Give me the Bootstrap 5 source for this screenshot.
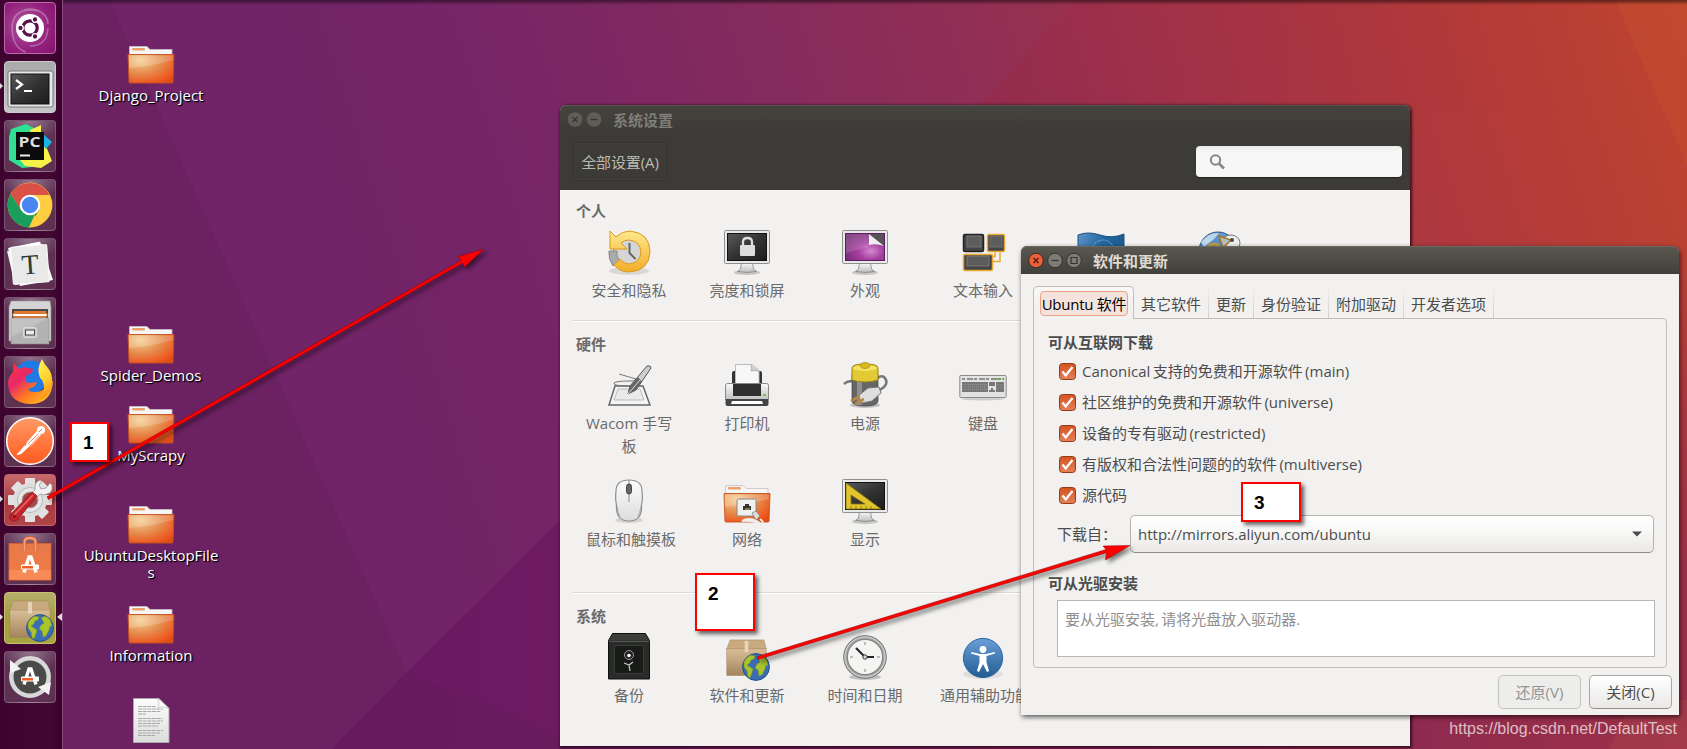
<!DOCTYPE html>
<html lang="zh-CN">
<head>
  <meta charset="UTF-8" />
  <title>Ubuntu Desktop</title>
  <link href="https://cdn.jsdelivr.net/npm/bootstrap@5.3.3/dist/css/bootstrap.min.css" rel="stylesheet" />
  <style>
    body {
      width: 1687px;
      height: 749px;
      overflow: hidden;
      font-family: "Open Sans", "Noto Sans CJK SC", sans-serif;
      font-size: 15px;
      line-height: 23px;
      color: #4c4c4c;
    }
    .wallpaper { position: absolute; inset: 0; }

    /* launcher */
    .launcher {
      position: relative;
      width: 62px;
      height: 749px;
      padding: 2px 0 0 4px;
      gap: 7px;
      background: linear-gradient(90deg, #3e042f, #420733 80%, #3a022c);
      box-shadow: 1px 0 0 #8a4b80;
    }
    .tile {
      position: relative;
      width: 52px;
      height: 52px;
      border-radius: 4px;
      border: 1px solid rgba(255, 255, 255, .16);
      background: radial-gradient(ellipse 34px 22px at 50% 0, rgba(255, 255, 255, .4), rgba(255, 255, 255, .1) 90%), #4c1a40;
    }
    .tile svg { position: absolute; left: -1px; top: -1px; }
    .tile-dash { background: radial-gradient(circle at 40% 45%, #b25aa0, #92207c 60%, #85146e); border-color: #b76aa9; }
    .tile-term { background: linear-gradient(#aaa, #c6c6c6); border-color: #ccc; }
    .tile-sys { background: linear-gradient(#c66a6c, #a83840 55%, #b04448); border-color: #c0686a; }
    .tile-soft { background: linear-gradient(#b4ae6c, #a5a03c 50%, #a8a443); border-color: #c4c070; }
    .tile.running::before, .tile.focused::after {
      content: "";
      position: absolute;
      top: 20px;
      border: 4px solid transparent;
    }
    .tile.running::before { left: -6px; border-left-color: #ddd; border-right-width: 0; }
    .tile.focused::after { right: -7px; border-right: 5px solid #ddd; border-left-width: 0; }

    /* desktop icons */
    .desk-icon {
      position: absolute;
      left: 81px;
      width: 140px;
      text-align: center;
      color: #fff;
      line-height: 17px;
      text-shadow: 1px 1px 0 #000, 1px 1px 2px rgba(0, 0, 0, .8);
    }
    .desk-icon svg { display: block; margin: 0 auto -3px; }
    .desk-icon span { display: block; }
    .at-django { top: 42px; } .at-spider { top: 322px; } .at-scrapy { top: 402px; }
    .at-files { top: 502px; } .at-info { top: 602px; } .at-doc { top: 697px; }

    /* windows */
    .win { position: absolute; background: #f2f1f0; }
    .win-settings {
      left: 560px; top: 105px; width: 850px; height: 641px;
      border-radius: 6px 6px 0 0;
      box-shadow: 1px 1px 3px 1px rgba(30, 0, 15, .75);
      color: #6a6a6a;
    }
    .win-updates {
      left: 1021px; top: 246px; width: 658px; height: 469px;
      border-radius: 7px 7px 0 0;
      box-shadow: 1px 2px 5px rgba(0, 0, 0, .65);
    }
    .win-head { height: 85px; background: linear-gradient(#45433e, #3c3b37 35%); border-radius: 6px 6px 0 0; box-shadow: inset 0 1px 0 #55534d; }
    .win-bar { height: 28px; padding-left: 7px; gap: 3px; font-weight: 700; }
    .win-bar span { padding: 2px 0 0 8px; }
    .win-updates .win-bar { background: linear-gradient(#5b5951, #403f3a); color: #dfdbd2; border-radius: 6px 6px 0 0; box-shadow: inset 0 1px 0 #6b6960; }
    .win-head .win-bar { color: #807d78; }
    .all-btn {
      width: 94px; height: 39px; margin: 9px 0 0 13px; padding: 2px 0 0;
      border: 1px solid #35342f; border-radius: 5px;
      box-shadow: inset 0 0 0 1px #434039;
      color: #bdb9b0; font-size: 15px; letter-spacing: -.1px;
    }
    .find-box {
      width: 206px; height: 31px; margin: 13px 8px 0 0; padding-left: 13px;
      border-radius: 4px; background: linear-gradient(#ebebeb, #f7f7f7 20%);
      box-shadow: 0 1px 1px #222;
    }
    .panel-group { padding: 12px 10px 0; }
    .panel-group.first { height: 130px; padding-top: 10px; }
    .panel-group.second { height: 272px; }
    .panel-group + .panel-group { background: linear-gradient(#dcdad8 1px, #fff 1px, #fff 2px, transparent 2px) 13px 0 / 824px 2px no-repeat; padding-top: 13px; }
    .group-name { height: 22px; line-height: 22px; margin: 0 0 7px 6px; font-size: 15px; font-weight: 700; }
    .panel-grid { display: grid; grid-template-columns: repeat(7, 118px); row-gap: 20px; }
    .panel-item { text-align: center; padding: 0 16px; white-space: nowrap; }
    .panel-item svg { display: block; margin: 0 auto 2px; }

    /* notebook */
    .notebook { padding: 12px 12px 0; }
    .notebook .nav-tabs { border: 0; height: 33px; align-items: flex-end; position: relative; z-index: 1; }
    .notebook .nav-link {
      padding: 0 7px; height: 31px; line-height: 34px; margin: 0 0 1px; color: #4c4c4c;
      border: 0; border-right: 1px solid; border-radius: 0;
      border-image: linear-gradient(#f2f1f0, #cfcdca) 1;
      white-space: nowrap;
    }
    .notebook .nav-link.active {
      width: 101px; height: 33px; margin: 0; padding: 4px 5px 0 6px;
      background: linear-gradient(#f8f8f7, #f2f1f0 60%);
      border: 1px solid #c0bebb; border-bottom: 0; border-image: none; border-radius: 5px 5px 0 0;
    }
    .focus-frame { display: block; height: 25px; line-height: 24px; border: 1px solid #f0a287; border-radius: 4px; background: #f4e3dd; text-align: center; letter-spacing: -.25px; }
    .tab-page { height: 350px; margin-top: -1px; border: 1px solid #c0bebb; border-radius: 0 4px 4px 4px; padding: 11px 12px 0 14px; }
    .block-name { font-size: 15px; font-weight: 700; line-height: 24px; margin: 0; }
    .src-list { padding-top: 2px; }
    .src-check { height: 31px; padding-left: 11px; gap: 6px; word-spacing: -1.5px; }
    .src-check svg { margin-top: -1px; }
    .download-row { height: 38px; margin: 4px 0 0 9px; }
    .download-row .row-label { width: 73px; }
    .server-btn {
      flex: 1; height: 38px; padding: 0 11px 0 7px; font-size: 15px; color: #4c4c4c;
      border: 1px solid #b6b3af; border-bottom-color: #8f8d89; border-radius: 5px;
      background: linear-gradient(#fff, #f9f9f8 40%, #eae8e7);
    }
    .disc-name { margin-top: 18px; }
    .disc-list { height: 57px; margin: 5px 0 0 9px; padding: 7px; border: 1px solid #b9b7b4; background: #fff; color: #8f8f8f; width: 598px; word-spacing: -1.5px; }
    .foot-btns { padding: 7px 7px 0; gap: 8px; }
    .foot-btns .btn { width: 83px; height: 34px; padding: 0; font-size: 15px; border: 1px solid #aaa7a3; border-bottom-color: #8f8d89; border-radius: 5px; background: linear-gradient(#fff, #eae8e7); color: #4c4c4c; }
    .foot-btns .btn:disabled { opacity: 1; background: #ededec; border-color: #c4c2bf; color: #949494; }

    /* numbered marks */
    .arrows { position: absolute; left: 0; top: 0; filter: drop-shadow(3px 3px 2px rgba(0, 0, 0, .5)); }
    .step { position: absolute; background: #fff; border: 2px solid #f00; box-shadow: 3px 3px 4px rgba(0, 0, 0, .6); font: bold 19px/24px "Liberation Sans", sans-serif; color: #000; }
    .step-1 { left: 70px; top: 422px; width: 39px; height: 40px; padding: 7px 0 0 11px; }
    .step-2 { left: 695px; top: 573px; width: 60px; height: 58px; padding: 7px 0 0 11px; }
    .step-3 { left: 1241px; top: 482px; width: 60px; height: 40px; padding: 7px 0 0 11px; }
    .site-mark { position: absolute; right: 10px; bottom: 9px; font-family: "Liberation Sans", sans-serif; font-size: 16px; line-height: 22px; color: rgba(255, 255, 255, .7); }
  </style>
</head>
<body>
  <!-- shared shapes -->
  <svg width="0" height="0" class="position-absolute">
    <defs>
      <radialGradient id="gFolder" cx=".27" cy=".2" r=".95"><stop offset="0" stop-color="#f6cf92" /><stop offset=".5" stop-color="#e58a4c" /><stop offset=".85" stop-color="#ee5a20" /><stop offset="1" stop-color="#e04c12" /></radialGradient>
      <linearGradient id="gGrey" x2="0" y2="1"><stop offset="0" stop-color="#fafafa" /><stop offset="1" stop-color="#bdbdbd" /></linearGradient>
      <linearGradient id="gPaper" x2="0" y2="1"><stop offset="0" stop-color="#fdfdfd" /><stop offset="1" stop-color="#dcdcdc" /></linearGradient>
      <linearGradient id="gDark" x2="1" y2="1"><stop offset="0" stop-color="#5a5a5a" /><stop offset=".5" stop-color="#333" /><stop offset="1" stop-color="#1c1c1c" /></linearGradient>
      <radialGradient id="gPurple" cx=".65" cy=".65" r=".8"><stop offset="0" stop-color="#d58bd0" /><stop offset=".4" stop-color="#a63fa0" /><stop offset="1" stop-color="#6d2a72" /></radialGradient>
      <linearGradient id="gGold" x2="0" y2="1"><stop offset="0" stop-color="#ffe98c" /><stop offset="1" stop-color="#f3ac28" /></linearGradient>
      <linearGradient id="gBox" x2="0" y2="1"><stop offset="0" stop-color="#d9bf98" /><stop offset="1" stop-color="#a4855c" /></linearGradient>
      <linearGradient id="gBlue" x2="0" y2="1"><stop offset="0" stop-color="#6a9ed8" /><stop offset="1" stop-color="#215d92" /></linearGradient>
      <linearGradient id="gFlag" x2="1" y2=".3"><stop offset="0" stop-color="#5b93c8" /><stop offset=".6" stop-color="#1f659f" /><stop offset="1" stop-color="#1d5c90" /></linearGradient>
      <linearGradient id="gBag" x2="0" y2="1"><stop offset="0" stop-color="#e77a4a" /><stop offset="1" stop-color="#f27a42" /></linearGradient>
      <linearGradient id="gFox" x1="0" y1="0" x2=".9" y2="1"><stop offset="0" stop-color="#ff3a3a" /><stop offset=".35" stop-color="#e8266a" /><stop offset=".65" stop-color="#ff7b1f" /><stop offset="1" stop-color="#ffc828" /></linearGradient>
      <linearGradient id="gTail" x2=".3" y2="1"><stop offset="0" stop-color="#fff36a" /><stop offset=".6" stop-color="#ffd22a" /><stop offset="1" stop-color="#ff8f1c" /></linearGradient>
      <linearGradient id="gPost" x2="0" y2="1"><stop offset="0" stop-color="#ff9a63" /><stop offset="1" stop-color="#ff5a20" /></linearGradient>
      <linearGradient id="gCheck" x2="0" y2="1"><stop offset="0" stop-color="#d2531f" /><stop offset="1" stop-color="#e68159" /></linearGradient>
    </defs>
    <symbol id="folder" viewBox="0 0 48 48">
      <path d="M2.500 12.500V4.500H20l3 3h22v6z" fill="#f6f6f6" stroke="#c9bfc5" stroke-width=".8" />
      <rect x="5" y="6" width="13" height="2.500" rx="1" fill="#f0a06c" />
      <path d="M1 12.500h46l-1 27.500q0 1-1 1H3q-1 0-1-1z" fill="url(#gFolder)" stroke="#c4521f" stroke-width=".9" />
      <path d="M2 13.500h44l-.3 4.500Q26 24 2 26z" fill="#fff" opacity=".2" />
    </symbol>
    <symbol id="monitor" viewBox="0 0 48 48">
      <ellipse cx="24" cy="43.500" rx="13" ry="2.500" fill="#000" opacity=".18" />
      <path d="M18.500 34h11l1 6 3 2.500q-9.500 1.800-19 0l3-2.500z" fill="url(#gGrey)" stroke="#777" stroke-width=".7" />
      <rect x="1.500" y="1.500" width="45" height="33" rx="1" fill="#e9e9e9" stroke="#8f8f8f" />
      <rect x="4.500" y="4.500" width="39" height="27" fill="url(#gDark)" stroke="#111" />
    </symbol>
    <symbol id="globe" viewBox="0 0 28 28">
      <circle cx="14" cy="14" r="13.400" fill="#3a6db4" stroke="#284f8a" />
      <path d="M2 9q2-5 7-7l4 1-1 3-3 1-1 3-3 2 3 2 3 2-1 4-2 5-2-1-1-6-3-4zM15 4l4-2q5 2 6 6l1 5-2-1-1 4-3 6-3 1-1-6-3-2 2-4 3-2z" fill="#aac42c" stroke="#6d8a28" stroke-width=".5" />
    </symbol>
    <symbol id="parcel" viewBox="0 0 48 48">
      <rect x="3" y="11" width="42" height="29" fill="url(#gBox)" stroke="#997c55" stroke-width=".5" />
      <path d="M6.500 2h36L45 11.500H3z" fill="#c9a97e" stroke="#a88960" stroke-width=".6" />
      <path d="M22 3h4v12h-4z" fill="#eee0c8" opacity=".8" />
    </symbol>
    <symbol id="letter-a" viewBox="0 0 20 20">
      <path d="M4 18.500L9 3h2l5 15.500" fill="none" stroke="#fff" stroke-width="3.400" />
      <rect x="1" y="10.500" width="18" height="5" rx="1" fill="#fff" />
      <rect x="2" y="12" width="11" height="2.500" fill="#f06020" />
    </symbol>
    <symbol id="check-on" viewBox="0 0 17 17">
      <rect x=".5" y=".5" width="16" height="16" rx="3" fill="url(#gCheck)" stroke="#963b16" />
      <path d="M3.500 8.500l3.200 4L13.500 4" fill="none" stroke="#fff" stroke-width="2.300" />
    </symbol>
  </svg>

  <svg class="wallpaper" width="1687" height="749">
    <defs>
      <linearGradient id="wMain" gradientUnits="userSpaceOnUse" x1="150" y1="500" x2="1687" y2="0">
        <stop offset="0" stop-color="#702468" /><stop offset=".25" stop-color="#742467" /><stop offset=".42" stop-color="#822a60" /><stop offset=".6" stop-color="#943052" /><stop offset=".7" stop-color="#a2344a" /><stop offset=".85" stop-color="#b23a3a" /><stop offset="1" stop-color="#bf442e" />
      </linearGradient>
      <linearGradient id="wLow" gradientUnits="userSpaceOnUse" x1="400" y1="0" x2="1687" y2="0">
        <stop offset="0" stop-color="#6a1a63" /><stop offset=".2" stop-color="#701a60" /><stop offset=".77" stop-color="#8e2a50" /><stop offset="1" stop-color="#9c3048" />
      </linearGradient>
      <linearGradient id="wEdge" x2="0" y2="1"><stop offset="0" stop-opacity=".5" /><stop offset="1" stop-opacity="0" /></linearGradient>
      <linearGradient id="wFade" x2="1"><stop offset="0" stop-color="#a01c30" stop-opacity=".16" /><stop offset="1" stop-color="#a01c30" stop-opacity="0" /></linearGradient>
      <linearGradient id="wSide" x2="0" y2="1"><stop offset="0" stop-color="#a03048" stop-opacity="0" /><stop offset="1" stop-color="#a03048" /></linearGradient>
    </defs>
    <rect width="1687" height="749" fill="url(#wMain)" />
    <path d="M0 0H110L407 672L332 749H0z" fill="#6c2262" />
    <path d="M332 749L407 672L560 520L1687 560V749z" fill="url(#wLow)" />
    <path d="M332 749L407 672L680 790z" fill="#641c5a" opacity=".5" />
    <path d="M1077 0L973 110H1600V0z" fill="url(#wFade)" />
    <path d="M1615 0L1687 165V0z" fill="#d0602c" opacity=".22" />
    <rect x="1670" y="260" width="17" height="300" fill="url(#wSide)" />
    <path d="M1609 749L1632 700H1687V749z" fill="#c06050" opacity=".2" />
    <rect width="1687" height="5" fill="url(#wEdge)" />
  </svg>

  <nav class="launcher d-flex flex-column">
    <div class="tile tile-dash"><svg width="52" height="52"><g fill="none" stroke="#fff" stroke-opacity=".3" stroke-width="1.500"><path d="M8 26Q9 8 26 8T44 22M44 26Q43 44 26 44M8 24Q8 46 22 50M20 8Q36 4 44 18" /></g><circle cx="26" cy="26" r="14" fill="#fff" /><circle cx="26" cy="26" r="7.200" fill="none" stroke="#5a1049" stroke-width="3.200" /><g fill="#5a1049" stroke="#fff" stroke-width="1.300"><circle cx="16.500" cy="26" r="2.800" /><circle cx="31" cy="17.500" r="2.800" /><circle cx="31" cy="34.500" r="2.800" /></g></svg></div>
    <div class="tile tile-term running"><svg width="52" height="52"><rect x="4" y="10" width="45" height="36" rx="2" fill="#e8e8e8" stroke="#777" /><rect x="7" y="13" width="38" height="30" fill="url(#gDark)" stroke="#111" /><path d="M12 19l6 4.500-6 4.500M20 30h8" fill="none" stroke="#fff" stroke-width="2.200" /></svg></div>
    <div class="tile"><svg width="52" height="52"><path d="M5 17L7 9 22 4l10 5v20l-4 18-10 1L5 40z" fill="#2fdf92" /><path d="M26 10l11-5v8l3 8 8 20-11 7-16-2-5-6 14-4z" fill="#f6f24a" /><path d="M39 14l9 8-6 7-5-6z" fill="#1ab4e4" /><rect x="12" y="12" width="28" height="28" fill="#0b0b0b" /><text x="14.500" y="27" font-family="Open Sans" font-size="15" font-weight="700" fill="#ddd" textLength="22" lengthAdjust="spacingAndGlyphs">PC</text><path d="M16 35.500h10" stroke="#eee" stroke-width="2" /></svg></div>
    <div class="tile"><svg width="52" height="52"><circle cx="26" cy="26" r="22.400" fill="#ffcd40" /><path d="M26 16H45.500A22.400 22.400 0 0 0 6.500 15L17 31z" fill="#da5044" /><path d="M6.600 15A22.400 22.400 0 0 0 25 48.400L35 31 17 31z" fill="#1a9e5c" /><path d="M26 26h9l-10 22.400 10-3z" fill="#ffcd40" /><circle cx="26" cy="26" r="10.300" fill="#fff" /><circle cx="26" cy="26" r="8.200" fill="#4a86f0" /></svg></div>
    <div class="tile"><svg width="52" height="52"><path d="M4 10L36 3.500 49 42 16 48z" fill="#fff" /><path d="M3 13l36-7 8 34-36 7z" fill="#f2f2f2" /><rect x="8" y="8" width="36" height="37" rx="1" transform="rotate(-4 26 26)" fill="#e9e9e9" stroke="#fafafa" /><text x="26" y="36" text-anchor="middle" font-family="Liberation Serif" font-size="28" fill="#2b3a34" transform="rotate(-4 26 26)">T</text></svg></div>
    <div class="tile"><svg width="52" height="52"><path d="M7 4h39l1 6v34H5V10z" fill="#d4d4d4" stroke="#999" stroke-width=".6" /><rect x="8" y="12" width="36" height="16" fill="#4a4a4a" /><path d="M10 14h32v8H10z" fill="#e07830" /><path d="M9 16.500h34v3H9z" fill="#fff" stroke="#e0762e" /><path d="M7 21h38v26H7z" fill="#b3b3b3" stroke="#8a8a8a" stroke-width=".6" /><path d="M7 21h38L7 40z" fill="#fff" opacity=".2" /><rect x="19.500" y="30.500" width="13" height="10" rx="2" fill="#c9c9c9" stroke="#ddd" /><rect x="21.500" y="33" width="9" height="5" fill="#eee" stroke="#444" /></svg></div>
    <div class="tile"><svg width="52" height="52"><circle cx="27" cy="21" r="16.500" fill="#1f7ae6" /><path d="M10 7l5 6q4-3 9-1l5 1-1 4-5 2-2 4q0 4 6 4l6-1q-2 6-8 6-2 4 6 4 10 0 12-9l6-2Q48 48 26 48 4 47 4 26q1-6 5-10z" fill="url(#gFox)" /><path d="M38 3q2 5 6 9 5 6 4 16-3 14-16 17 9-6 8-15-1-6-4-8-4-9 2-19z" fill="url(#gTail)" /></svg></div>
    <div class="tile"><svg width="52" height="52"><circle cx="26" cy="26" r="23.300" fill="url(#gPost)" stroke="#fff" stroke-width="1.500" /><circle cx="37" cy="15" r="4" fill="#fff" /><path d="M38 14l-3 3" stroke="#f26b3a" stroke-width="1" /><path d="M33 16l4 4-9 10-8 5 3-8z" fill="#fff" /><path d="M24 29l10-10M26 31l9-10" stroke="#f27b4a" stroke-width=".8" /><path d="M21 31l-5 6-3 2.500 4-1 6-6" fill="#fff" stroke="#fff" stroke-width="1.200" /></svg></div>
    <div class="tile tile-sys running"><svg width="52" height="52"><g transform="translate(26 26)"><g fill="#e2e2e2"><rect x="-5" y="-22" width="10" height="44" rx="1" /><rect x="-5" y="-22" width="10" height="44" rx="1" transform="rotate(45)" /><rect x="-5" y="-22" width="10" height="44" rx="1" transform="rotate(90)" /><rect x="-5" y="-22" width="10" height="44" rx="1" transform="rotate(135)" /></g><circle r="17" fill="#dedede" /><circle r="12.500" fill="#e8e8e8" stroke="#b8b8b8" /><circle r="8" fill="#a8474b" stroke="#aaa" /></g><path d="M31 16q-1-8 5-10l2 1-3 4 2 4 5-1 4-5 2 2q1 8-5 9-3 2-7 0l-5 5-5-5z" fill="#f2f2f2" stroke="#888" stroke-width=".7" /><path d="M33 22L14 45q-4 4-7 1-3-3 1-7L28 18z" fill="#c4262c" stroke="#8e1a1e" /><path d="M29 21L10 41" stroke="#e8686a" stroke-width="1.500" /><circle cx="10.500" cy="42.500" r="1.800" fill="#8e1a1e" /></svg></div>
    <div class="tile"><svg width="52" height="52"><path d="M5 10.500h42V47H5z" fill="url(#gBag)" stroke="#d65f30" /><path d="M5 37h42v10H5z" fill="#ff9c68" opacity=".5" /><path d="M20.500 18V9q0-4 5.500-4t5.500 4v9" fill="none" stroke="#d9622f" stroke-width="3.500" /><path d="M20.500 18V9q0-4 5.500-4t5.500 4v9" fill="none" stroke="#f6a27c" stroke-width="1.800" /><use href="#letter-a" x="16" y="20" width="20" height="22" /></svg></div>
    <div class="tile tile-soft running focused"><svg width="52" height="52"><use href="#parcel" x="3" y="7" width="46" height="46" /><use href="#globe" x="22" y="22" width="28" height="28" /></svg></div>
    <div class="tile"><svg width="52" height="52"><circle cx="26" cy="26" r="17" fill="#4a4a48" /><circle cx="26" cy="26" r="18.700" fill="none" stroke="#d8d8d8" stroke-width="4.500" /><path d="M6 9l11 9-11 4z" fill="#f2f2f2" /><path d="M34 36l13-5-2 13z" fill="#f2f2f2" /><use href="#letter-a" x="16" y="15" width="20" height="20" /></svg></div>
  </nav>

  <div class="desk-icon at-django"><svg width="48" height="48"><use href="#folder" /></svg><span>Django_Project</span></div>
  <div class="desk-icon at-spider"><svg width="48" height="48"><use href="#folder" /></svg><span>Spider_Demos</span></div>
  <div class="desk-icon at-scrapy"><svg width="48" height="48"><use href="#folder" /></svg><span>MyScrapy</span></div>
  <div class="desk-icon at-files"><svg width="48" height="48"><use href="#folder" /></svg><span>UbuntuDesktopFile<br>s</span></div>
  <div class="desk-icon at-info"><svg width="48" height="48"><use href="#folder" /></svg><span>Information</span></div>
  <div class="desk-icon at-doc"><svg width="48" height="48"><path d="M6.500 1.500H32l10 10v34H6.500z" fill="url(#gPaper)" stroke="#aaa" /><path d="M31 1.500q2 6 0 9 5-2 11 1z" fill="#fff" stroke="#bbb" stroke-width=".7" /><path d="M11 9.500h18M11 12h25M11 14.500h23M11 17h8M11 21.500h24M11 24h25M11 26.500h22M11 29h20M11 33.500h25M11 36h22M11 38.500h17" stroke="#a9a9a9" stroke-dasharray="4 .6" /></svg></div>

  <!-- system settings -->
  <section class="win win-settings">
    <div class="win-head">
      <div class="win-bar d-flex align-items-center">
        <svg width="16" height="16"><circle cx="8" cy="8.500" r="7.300" fill="#5f5d57" /><path d="M5.500 6l5 5M10.500 6l-5 5" stroke="#36342f" stroke-width="1.200" /></svg>
        <svg width="16" height="16"><circle cx="8" cy="8.500" r="7.300" fill="#5f5d57" /><path d="M4.500 8.500h7" stroke="#36342f" stroke-width="1.200" /></svg>
        <span>系统设置</span>
      </div>
      <div class="d-flex justify-content-between">
        <button class="btn all-btn">全部设置(A)</button>
        <div class="find-box d-flex align-items-center"><svg width="16" height="16"><circle cx="6.500" cy="6" r="4.700" fill="none" stroke="#868686" stroke-width="2" /><path d="M10 9.500l5 5" stroke="#868686" stroke-width="2.600" /></svg></div>
      </div>
    </div>
    <div class="panel-group first">
      <h2 class="group-name">个人</h2>
      <div class="panel-grid">
        <div class="panel-item"><svg width="48" height="48"><ellipse cx="24" cy="42" rx="20" ry="4" opacity=".1" /><circle cx="24" cy="24" r="16" fill="#d5d5d5" stroke="#888" /><path d="M4 22q-1 8 4 15l6-6q-3-4-2-9z" fill="#aaa" stroke="#888" /><path d="M5 2l6 6Q17 2 25 2q20 2 20 21-1 19-21 20-9 0-15-7l6-6q4 5 9 5 11-1 12-12-1-11-12-12-5 0-8 3l6 6H5z" fill="url(#gGold)" stroke="#d9991a" /><path d="M24.500 14v10l6 6" fill="none" stroke="#666" stroke-width="2" /></svg>安全和隐私</div>
        <div class="panel-item"><svg width="48" height="48"><use href="#monitor" /><rect x="17" y="16" width="15" height="11" rx="1" fill="#ddd" /><path d="M20 17v-4q0-4 4.500-4t4.500 4v4" fill="none" stroke="#ddd" stroke-width="2.300" /></svg>亮度和锁屏</div>
        <div class="panel-item"><svg width="48" height="48"><use href="#monitor" /><rect x="4.500" y="4.500" width="39" height="27" fill="url(#gPurple)" stroke="#5d1b60" /><path d="M5 5h23v13L5 24z" fill="#fff" opacity=".15" /><path d="M28 5h15v12z" fill="#555" /><path d="M28 5v11q7-2 15 1z" fill="#eee" /></svg>外观</div>
        <div class="panel-item"><svg width="48" height="48"><g stroke="#222" stroke-width="1.500" fill="#444"><rect x="4.500" y="5.500" width="20" height="17" rx="1.500" /><rect x="28.500" y="5.500" width="17" height="17" rx="1.500" stroke="#eaa92e" /><rect x="4.500" y="25.500" width="29" height="16" rx="1.500" stroke="#eaa92e" /></g><path d="M41 23.500v9h-7M36 23.500v4h-3" fill="none" stroke="#eaa92e" stroke-width="1.500" /><g fill="#5c5c5c" stroke="#858585" stroke-width=".7"><rect x="8" y="7" width="14" height="11" /><rect x="31" y="7" width="12" height="11" /><rect x="8" y="27" width="22" height="10" /></g></svg>文本输入</div>
        <div class="panel-item"><svg width="48" height="48"><path d="M1 6q10-4 22 0t24-1v34q-12 4-24 0T1 40z" fill="url(#gFlag)" stroke="#1c5078" /><circle cx="26" cy="22" r="11" fill="none" stroke="#7fb0d4" stroke-dasharray="2 1" /></svg></div>
        <div class="panel-item"><svg width="48" height="48"><circle cx="23" cy="22" r="19" fill="url(#gBlue)" stroke="#2a547e" /><path d="M6 13q8-10 18-9l-5 6-10 8z" fill="#bbd8ea" /><path d="M13 21q0-6 6-6t6 6" fill="none" stroke="#c59c3c" stroke-width="3" /><ellipse cx="36" cy="14" rx="9" ry="8" fill="#ededed" stroke="#777" /><path d="M24 7l12 4-3 3-5 5z" fill="#bbb" stroke="#a07a22" stroke-width="1.500" /><circle cx="37" cy="11" r="2" fill="#444" /></svg></div>
      </div>
    </div>
    <div class="panel-group second">
      <h2 class="group-name">硬件</h2>
      <div class="panel-grid">
        <div class="panel-item"><svg width="48" height="48"><path d="M10 24h28l7 19H4z" fill="#f4f4f4" stroke="#666" stroke-width="1.500" /><path d="M13 27h22l4 11H9z" fill="#eaeaea" stroke="#bbb" /><path d="M14 12l17 5q2 2-6 2-14 0-16 2-1 3 14 3" fill="none" stroke="#777" /><path d="M42 4q4-1 4 2L31 28l-8 4 2-8z" fill="#c9cfd2" stroke="#555" /><path d="M23 32l2-8 8-9 4 5-6 8z" fill="#666" /><path d="M23 32l12-14" stroke="#ddd" /></svg>Wacom 手写<br>板</div>
        <div class="panel-item"><svg width="48" height="48"><rect x="9" y="9" width="30" height="18" rx="2" fill="#333" /><path d="M12.500 2.500H29l7 6V25H12.500z" fill="#f7f7f7" stroke="#bbb" /><path d="M28 3q1 4 0 6 3-1 8 0" fill="#ccc" stroke="#999" stroke-width=".7" /><rect x="2.500" y="21.500" width="43" height="17" rx="2" fill="url(#gGrey)" stroke="#888" /><path d="M10 22h28v12H10z" fill="#2f2f2f" /><path d="M2.500 37h43v5q0 2-2 2h-39q-2 0-2-2z" fill="#444" /><path d="M9 39h30l1 3H8z" fill="#fff" /><rect x="40" y="32" width="3" height="2" fill="#6fce3f" /></svg>打印机</div>
        <div class="panel-item"><svg width="48" height="48"><ellipse cx="24" cy="43" rx="15" ry="3" opacity=".2" /><path d="M3 22q3-3 9-3M37 16q3-3 6-1 5 5 0 10l-7 5" fill="none" stroke="#777" stroke-width="2.500" /><path d="M11 12h26v27q0 5-13 5t-13-5z" fill="#666" stroke="#444" stroke-width=".7" /><path d="M16 12h5v31h-5z" fill="#ccc" opacity=".4" /><path d="M11 6q0-4 13-4t13 4v12q-13 4-26 0z" fill="#e3c936" stroke="#9c8614" /><ellipse cx="24" cy="6" rx="12" ry="3" fill="#f3e263" /><ellipse cx="24" cy="3.500" rx="5" ry="3" fill="#d7b91e" stroke="#96800f" stroke-width=".6" /><path d="M17 34l10-8 11-1 2 6-9 8-10 2z" fill="#dedede" stroke="#777" /><path d="M19 34l-9 5M23 37l-9 5" stroke="#b98748" stroke-width="2.600" /></svg>电源</div>
        <div class="panel-item"><svg width="48" height="48"><ellipse cx="24" cy="37" rx="22" ry="1.500" opacity=".15" /><rect x=".8" y="13.500" width="46.400" height="22" rx="1" fill="#e2e2e2" stroke="#8b8b8b" /><path d="M3 17h42" stroke="#777" stroke-width="1.500" stroke-dasharray="3 2 6 1" /><path d="M37 17h8" stroke="#66a83e" stroke-width="1.500" stroke-dasharray="2 1" /><path d="M3 20h26v10H3zM30 20h6v4h-6zM37 20h8v10h-8zM32 26h2v2h2v2h-6v-2h2z" fill="#777" /><path d="M3 22.500h26M3 25h26M3 27.500h26M37 23h8M37 26h8" stroke="#aaa" stroke-width=".6" stroke-dasharray="1 1" /></svg>键盘</div>
        <div class="panel-item"></div><div class="panel-item"></div><div class="panel-item"></div>
        <div class="panel-item"><svg width="48" height="48"><ellipse cx="24" cy="42" rx="14" ry="3" opacity=".12" /><path d="M24 2q13 0 13 11 1 8-.5 14 1 16-12.500 16T11.500 27Q10 21 11 13 11 2 24 2z" fill="url(#gPaper)" stroke="#8f8f8f" stroke-width="1.200" /><path d="M12 28q1 7 3 11M36 28q-1 7-3 11" fill="none" stroke="#aaa" /><path d="M24 2v22" stroke="#888" /><rect x="21.500" y="6" width="5" height="10" rx="2.500" fill="#666" stroke="#444" /></svg><span class="d-block mx-n3">鼠标和触摸板</span></div>
        <div class="panel-item"><svg width="48" height="48"><use href="#folder" y="3" width="48" height="48" /><rect x="14" y="21" width="19" height="17" rx="1.500" fill="#f0f0ee" stroke="#888" /><path d="M20 32v-4h2v-2h4v2h2v4z" fill="#333" /><path d="M22 31h5" stroke="#d5c43a" /><path d="M29 35l4-2 4 5-4 4z" fill="#ddd" stroke="#777" stroke-width=".7" /><path d="M19 43q8-5 18 2-10-3-18-2zM37 41q4 3 2 4" fill="none" stroke="#eee" stroke-width="2" /></svg>网络</div>
        <div class="panel-item"><svg width="48" height="48"><use href="#monitor" /><path d="M5 5v26h35zM10 17l14 9H10z" fill="#e0c52f" stroke="#857210" stroke-width=".8" fill-rule="evenodd" /><path d="M10 31v-3M15 31v-3M20 31v-3M25 31v-3M30 31v-3" stroke="#857210" stroke-width=".8" /></svg>显示</div>
      </div>
    </div>
    <div class="panel-group">
      <h2 class="group-name">系统</h2>
      <div class="panel-grid">
        <div class="panel-item"><svg width="48" height="48" overflow="visible"><path d="M7.500 -.5h33l4 7v38.500h-41V6.500z" fill="#292b29" stroke="#111" /><path d="M8 0h32l4 6.500H4z" fill="#3c3e3c" /><path d="M4 7.500h40" stroke="#555" /><rect x="9.500" y="11.500" width="29" height="28" rx="2" fill="#191b19" stroke="#3a3c3a" /><circle cx="24" cy="21" r="4.500" fill="#222" stroke="#999" /><circle cx="24" cy="21.500" r="1.800" fill="#fff" /><path d="M24 31l-5-2M24 31l4-3M24 31l1 6" stroke="#ccc" stroke-width="1.200" /></svg>备份</div>
        <div class="panel-item"><svg width="48" height="48"><use href="#parcel" x="1" y="4" width="45" height="45" /><use href="#globe" x="19" y="19" width="28" height="28" /></svg>软件和更新</div>
        <div class="panel-item"><svg width="48" height="48"><ellipse cx="24" cy="43" rx="16" ry="3" opacity=".2" /><circle cx="24" cy="23" r="21.300" fill="#a5a5a3" stroke="#777" /><circle cx="24" cy="23" r="20" fill="none" stroke="#d8d8d8" /><circle cx="24" cy="23" r="17.700" fill="#f4f4f2" stroke="#888" stroke-width="1.300" /><g stroke="#aaa" stroke-width="1.500"><path d="M24 8v3M24 35v3M9 23h3M36 23h3" /></g><path d="M24 23l-9-9M24 23h9" stroke="#222" stroke-width="2" /><circle cx="24" cy="23" r="2.200" fill="#ddd" stroke="#333" /></svg>时间和日期</div>
        <div class="panel-item"><svg width="48" height="48"><ellipse cx="24" cy="40" rx="20" ry="5" opacity=".08" /><circle cx="24" cy="24" r="19.600" fill="url(#gBlue)" stroke="#2c659e" /><circle cx="24" cy="15.500" r="3.400" fill="#fff" /><path d="M12 19.500l8.500 2.500v6L18 37l2 1 4-8 4 8 2-1-2.500-9v-6l8.500-2.500-.5-1.500L27 20h-6l-8.500-2z" fill="#fff" /></svg><span class="d-block mx-n3">通用辅助功能</span></div>
      </div>
    </div>
  </section>

  <!-- software & updates -->
  <section class="win win-updates">
    <div class="win-bar d-flex align-items-center">
      <svg width="16" height="16"><circle cx="8" cy="8.500" r="7.300" fill="#ea6038" stroke="#3b2a22" /><path d="M5.500 6l5 5M10.500 6l-5 5" stroke="#4d1c0c" stroke-width="1.300" /></svg>
      <svg width="16" height="16"><circle cx="8" cy="8.500" r="7.300" fill="#7d7b73" stroke="#34332e" /><path d="M4.500 8.500h7" stroke="#34332e" stroke-width="1.200" /></svg>
      <svg width="16" height="16"><circle cx="8" cy="8.500" r="7.300" fill="#7d7b73" stroke="#34332e" /><path d="M5 5.500h6v6H5z" fill="none" stroke="#34332e" stroke-width="1.200" /></svg>
      <span>软件和更新</span>
    </div>
    <div class="notebook">
      <ul class="nav nav-tabs flex-nowrap">
        <li class="nav-item"><a class="nav-link active"><span class="focus-frame">Ubuntu 软件</span></a></li>
        <li class="nav-item"><a class="nav-link">其它软件</a></li>
        <li class="nav-item"><a class="nav-link">更新</a></li>
        <li class="nav-item"><a class="nav-link">身份验证</a></li>
        <li class="nav-item"><a class="nav-link">附加驱动</a></li>
        <li class="nav-item"><a class="nav-link">开发者选项</a></li>
      </ul>
      <div class="tab-page">
        <h3 class="block-name">可从互联网下载</h3>
        <div class="src-list">
          <div class="src-check d-flex align-items-center"><svg width="17" height="17"><use href="#check-on" /></svg><span>Canonical 支持的免费和开源软件 (main)</span></div>
          <div class="src-check d-flex align-items-center"><svg width="17" height="17"><use href="#check-on" /></svg><span>社区维护的免费和开源软件 (universe)</span></div>
          <div class="src-check d-flex align-items-center"><svg width="17" height="17"><use href="#check-on" /></svg><span>设备的专有驱动 (restricted)</span></div>
          <div class="src-check d-flex align-items-center"><svg width="17" height="17"><use href="#check-on" /></svg><span>有版权和合法性问题的的软件 (multiverse)</span></div>
          <div class="src-check d-flex align-items-center"><svg width="17" height="17"><use href="#check-on" /></svg><span>源代码</span></div>
        </div>
        <div class="download-row d-flex align-items-center">
          <span class="row-label">下载自：</span>
          <button class="btn server-btn d-flex align-items-center justify-content-between"><span>http://mirrors.aliyun.com/ubuntu</span><svg width="10" height="6"><path d="M0 .5h10l-5 5z" fill="#4c4c4c" /></svg></button>
        </div>
        <h3 class="block-name disc-name">可从光驱安装</h3>
        <div class="disc-list">要从光驱安装, 请将光盘放入驱动器.</div>
      </div>
    </div>
    <div class="foot-btns d-flex justify-content-end">
      <button class="btn" disabled>还原(V)</button>
      <button class="btn">关闭(C)</button>
    </div>
  </section>

  <svg class="arrows" width="1687" height="749">
    <g fill="#f00" stroke="#8c0000" stroke-width=".5">
      <path d="M47 496.800L461 260.500 458.500 256.500 484 249 464.500 267 462.500 263 48.500 499.500z" />
      <path d="M757 656.600L1106 549.500 1103 546 1130 545.500 1105.500 560 1106.500 552.700 758 659.500z" />
    </g>
  </svg>
  <div class="step step-1">1</div>
  <div class="step step-2">2</div>
  <div class="step step-3">3</div>
  <div class="site-mark">https://blog.csdn.net/DefaultTest</div>
  <script src="https://cdn.jsdelivr.net/npm/bootstrap@5.3.3/dist/js/bootstrap.bundle.min.js"></script>
</body>
</html>
